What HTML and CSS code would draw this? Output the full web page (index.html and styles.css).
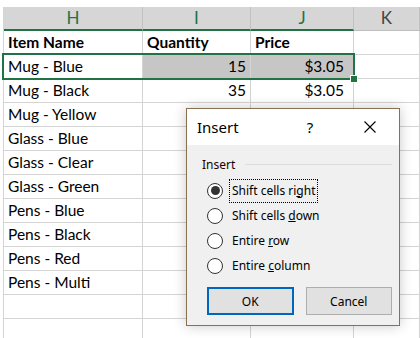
FILE: index.html
```html
<!DOCTYPE html>
<html lang="en">
<head>
    <meta charset="UTF-8">
    <title>Insert cells</title>
    <link rel="stylesheet" href="styles.css">
</head>
<body>
    <div class="sheet">
        <div class="top-strip"></div>
        <!-- Column headers and cells -->
        <div class="grid">
            <div class="hdr sel">H</div>
            <div class="hdr sel">I</div>
            <div class="hdr sel">J</div>
            <div class="hdr">K</div>

            <div class="cell bold">Item Name</div>
            <div class="cell bold">Quantity</div>
            <div class="cell bold">Price</div>
            <div class="cell"></div>

            <div class="cell">Mug - Blue</div>
            <div class="cell num hl">15</div>
            <div class="cell num price hl">$3.05</div>
            <div class="cell"></div>

            <div class="cell">Mug - Black</div>
            <div class="cell num">35</div>
            <div class="cell num price">$3.05</div>
            <div class="cell"></div>

            <div class="cell">Mug - Yellow</div><div class="cell"></div><div class="cell"></div><div class="cell"></div>
            <div class="cell">Glass - Blue</div><div class="cell"></div><div class="cell"></div><div class="cell"></div>
            <div class="cell">Glass - Clear</div><div class="cell"></div><div class="cell"></div><div class="cell"></div>
            <div class="cell">Glass - Green</div><div class="cell"></div><div class="cell"></div><div class="cell"></div>
            <div class="cell">Pens - Blue</div><div class="cell"></div><div class="cell"></div><div class="cell"></div>
            <div class="cell">Pens - Black</div><div class="cell"></div><div class="cell"></div><div class="cell"></div>
            <div class="cell">Pens - Red</div><div class="cell"></div><div class="cell"></div><div class="cell"></div>
            <div class="cell">Pens - Multi</div><div class="cell"></div><div class="cell"></div><div class="cell"></div>
            <div class="cell"></div><div class="cell"></div><div class="cell"></div><div class="cell"></div>
            <div class="cell"></div><div class="cell"></div><div class="cell"></div><div class="cell"></div>
        </div>

        <!-- Selected range H2:J2 -->
        <div class="selection"><span class="handle"></span></div>

        <!-- Insert dialog -->
        <div class="dialog">
            <div class="titlebar">
                <span class="title">Insert</span>
                <span class="help">?</span>
                <svg class="close" width="12" height="12" viewBox="0 0 12 12">
                    <path d="M0.5 0.5 L11.5 11.5 M11.5 0.5 L0.5 11.5" stroke="#000" stroke-width="1.1" fill="none"/>
                </svg>
            </div>
            <div class="body">
                <div class="group">
                    <span>Insert</span>
                    <span class="line"></span>
                </div>
                <div class="options">
                    <div class="option">
                        <span class="radio checked"></span>
                        <span class="label focus">Shift cells ri<u>g</u>ht</span>
                    </div>
                    <div class="option">
                        <span class="radio"></span>
                        <span class="label">Shift cells <u>d</u>own</span>
                    </div>
                    <div class="option">
                        <span class="radio"></span>
                        <span class="label">Entire <u>r</u>ow</span>
                    </div>
                    <div class="option">
                        <span class="radio"></span>
                        <span class="label">Entire <u>c</u>olumn</span>
                    </div>
                </div>
                <div class="buttons">
                    <button class="btn default">OK</button>
                    <button class="btn">Cancel</button>
                </div>
            </div>
        </div>
    </div>
</body>
</html>
```

FILE: styles.css
```css
/* Page */
body {
    margin: 0;
    background-color: #fff;
    overflow: hidden;
}
.sheet {
    position: relative;
    width: 420px;
    height: 338px;
    overflow: hidden;
    font-family: Lato, "Liberation Sans", sans-serif;
    color: #000;
}
.top-strip {
    height: 7px;
    background-color: #fff;
}
/* Spreadsheet grid */
.grid {
    display: grid;
    grid-template-columns: 139px 108px 103px 1fr;
    grid-auto-rows: 24px;
    margin-left: 3px;
    border-left: 1px solid #d4d4d4;
}
.hdr {
    box-sizing: border-box;
    background-color: #d6d6d6;
    border-right: 1px solid #c2c2c2;
    border-bottom: 1px solid #bdbdbd;
    text-align: center;
    font-size: 17px;
    line-height: 22px;
    color: #444;
}
.hdr.sel {
    border-bottom: 2px solid #217346;
    color: #217346;
}
.cell {
    box-sizing: border-box;
    border-right: 1px solid #d4d4d4;
    border-bottom: 1px solid #d4d4d4;
    padding: 0 4px;
    font-size: 15.5px;
    line-height: 23px;
    white-space: nowrap;
    overflow: hidden;
}
.bold {
    font-weight: bold;
}
.num {
    text-align: right;
}
.price {
    padding-right: 9px;
}
.hl {
    background-color: #c6c6c6;
}
/* Green selection frame */
.selection {
    position: absolute;
    left: 2px;
    top: 53px;
    width: 353px;
    height: 27px;
    box-sizing: border-box;
    border: 2px solid #217346;
}
.handle {
    position: absolute;
    right: -5px;
    bottom: -5px;
    width: 6px;
    height: 6px;
    background-color: #217346;
    border: 1px solid #fff;
}
/* Dialog */
.dialog {
    position: absolute;
    left: 186px;
    top: 108px;
    width: 214px;
    height: 218px;
    box-sizing: border-box;
    border: 1px solid #8a7052;
    background-color: #f0f0f0;
    box-shadow: 0 0 12px rgba(0, 0, 0, 0.22);
    font-family: "Noto Sans", "Open Sans", sans-serif;
}
.titlebar {
    display: flex;
    align-items: center;
    height: 36px;
    background-color: #fff;
    padding: 0 0 0 10px;
}
.title {
    font-size: 15px;
    color: #000;
    flex: 1;
}
.help {
    font-size: 15px;
    width: 16px;
    text-align: center;
    margin-right: 46px;
}
.close {
    margin-right: 23px;
}
.body {
    padding: 10px 7px 0 15px;
    font-size: 12px;
}
.group {
    display: flex;
    align-items: center;
    height: 18px;
    gap: 10px;
    color: #1a0000;
}
.group .line {
    flex: 1;
    height: 1px;
    background-color: #dcdcdc;
}
.options {
    margin-top: 5px;
}
.option {
    display: flex;
    align-items: center;
    height: 25px;
    padding-left: 5px;
}
.radio {
    box-sizing: border-box;
    width: 16px;
    height: 16px;
    border: 1px solid #333;
    border-radius: 50%;
    background-color: #fff;
    margin-right: 6px;
    display: flex;
    align-items: center;
    justify-content: center;
}
.radio.checked::after {
    content: "";
    width: 9px;
    height: 9px;
    border-radius: 50%;
    background-color: #333;
}
.label {
    padding: 2px 2px 3px;
    border: 1px dotted transparent;
}
.label.focus {
    border-color: #000;
}
.buttons {
    display: flex;
    gap: 12px;
    margin-top: 9px;
    padding-left: 5px;
}
.btn {
    box-sizing: border-box;
    width: 87px;
    height: 28px;
    background-color: #e1e1e1;
    border: 1px solid #adadad;
    font-family: "Noto Sans", "Open Sans", sans-serif;
    font-size: 12px;
    color: #000;
    padding: 0;
}
.btn.default {
    border: 2px solid #0067c0;
}
```
